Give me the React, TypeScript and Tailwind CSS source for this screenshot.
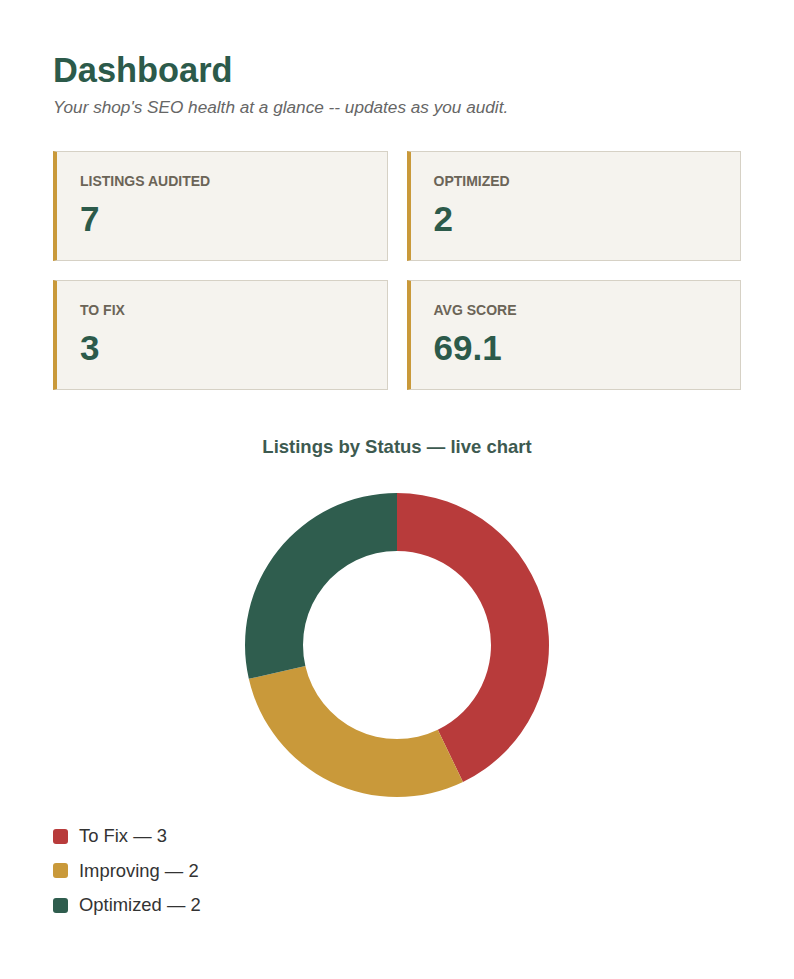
const stats = [
  { label: "Listings Audited", value: "7" },
  { label: "Optimized", value: "2" },
  { label: "To Fix", value: "3" },
  { label: "Avg Score", value: "69.1" },
];

const slices = [
  { label: "To Fix", value: 3, color: "#b83b3b" },
  { label: "Improving", value: 2, color: "#c9993a" },
  { label: "Optimized", value: 2, color: "#2f5d4e" },
];

function arcPath(cx: number, cy: number, r: number, ir: number, a0: number, a1: number) {
  const pt = (rad: number, a: number) => [cx + rad * Math.sin(a), cy - rad * Math.cos(a)];
  const [x0, y0] = pt(r, a0);
  const [x1, y1] = pt(r, a1);
  const [x2, y2] = pt(ir, a1);
  const [x3, y3] = pt(ir, a0);
  const large = a1 - a0 > Math.PI ? 1 : 0;
  return `M${x0} ${y0} A${r} ${r} 0 ${large} 1 ${x1} ${y1} L${x2} ${y2} A${ir} ${ir} 0 ${large} 0 ${x3} ${y3} Z`;
}

function Donut() {
  const total = slices.reduce((s, d) => s + d.value, 0);
  let start = 0;
  return (
    <svg width="306" height="306" viewBox="0 0 306 306">
      {slices.map((s) => {
        const a0 = start;
        const a1 = start + (s.value / total) * Math.PI * 2;
        start = a1;
        return <path key={s.label} d={arcPath(153, 153, 152, 94, a0, a1)} fill={s.color} />;
      })}
    </svg>
  );
}

export default function App() {
  return (
    <div className="min-h-screen bg-white px-[53px] pt-[50px] font-['Liberation_Sans',Arial,sans-serif]">
      <h1 className="text-[34.4px] font-bold leading-[40px] text-[#2c5a4a]">Dashboard</h1>
      <p className="mt-[7px] text-[17.2px] italic leading-[20px] text-[#666]">
        Your shop's SEO health at a glance -- updates as you audit.
      </p>

      <div className="mt-[34px] grid grid-cols-2 gap-x-[19px] gap-y-[19px]">
        {stats.map((s) => (
          <div
            key={s.label}
            className="h-[110px] border border-l-4 border-[#d6d1c5] border-l-[#c9993a] bg-[#f5f3ee] pl-[23px] pt-[21px]"
          >
            <div className="text-[14px] font-bold uppercase leading-[16px] text-[#6b6457]">{s.label}</div>
            <div className="mt-[10px] text-[35px] font-bold leading-[40px] text-[#2c5a4a]">{s.value}</div>
          </div>
        ))}
      </div>

      <div className="mt-[46px] text-center text-[18.5px] font-bold leading-[22px] text-[#3d5a50]">
        Listings by Status — live chart
      </div>

      <div className="mt-[34px] flex justify-center">
        <Donut />
      </div>

      <div className="mt-[28px] flex flex-col gap-[14.5px]">
        {slices.map((s) => (
          <div key={s.label} className="flex items-center gap-[11px] text-[18.4px] leading-[20px] text-[#333]">
            <span className="h-[15px] w-[15px] rounded-[3px]" style={{ backgroundColor: s.color }} />
            <span>
              {s.label} — {s.value}
            </span>
          </div>
        ))}
      </div>
    </div>
  );
}
